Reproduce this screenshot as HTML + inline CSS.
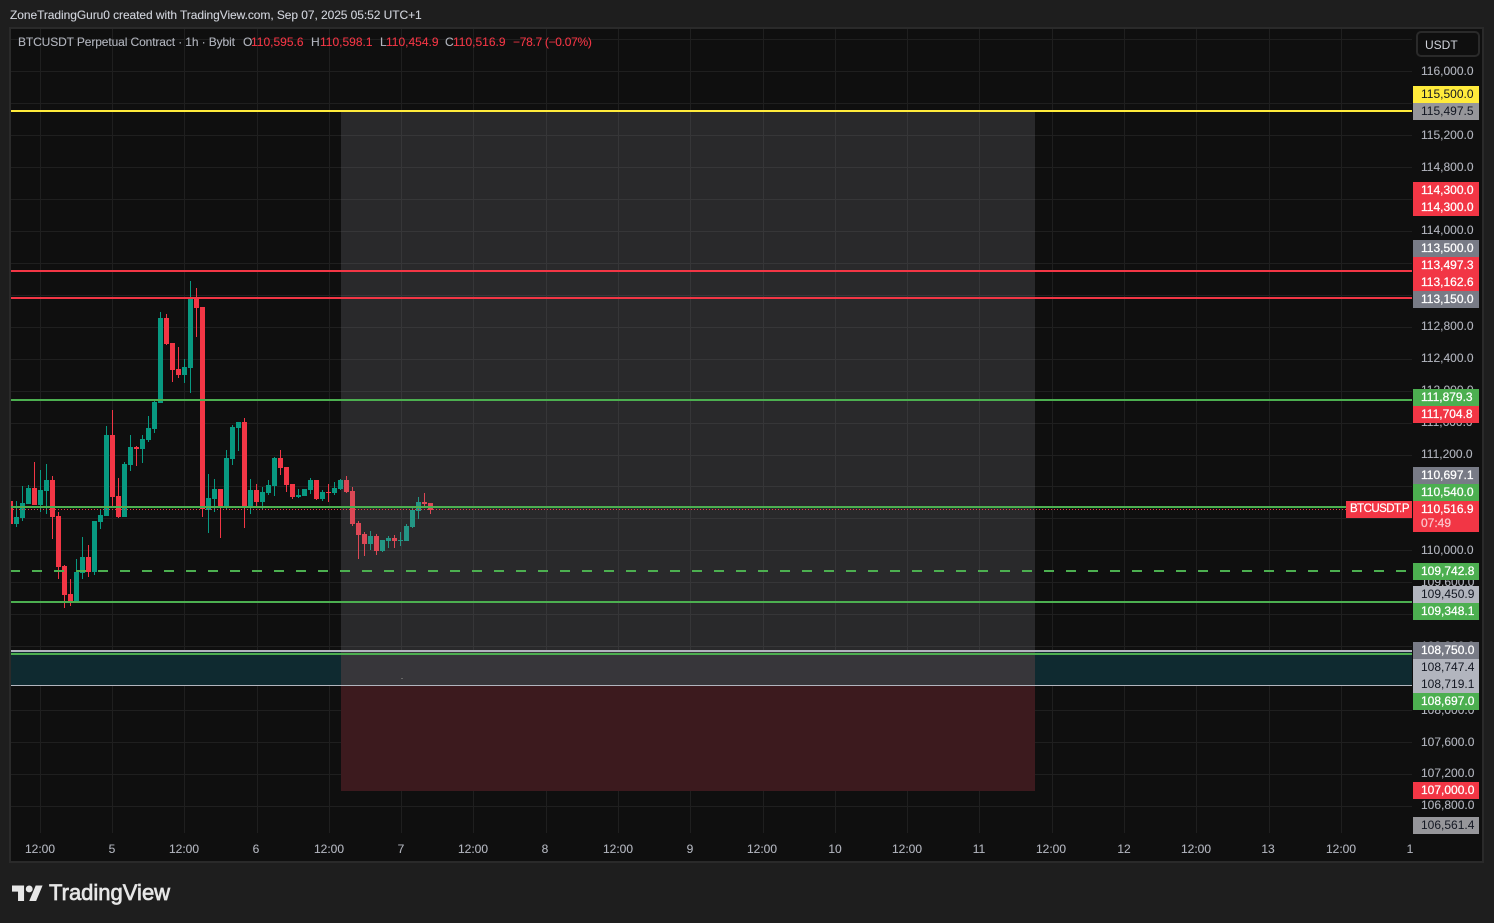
<!DOCTYPE html>
<html><head><meta charset="utf-8"><style>
html,body{margin:0;padding:0;background:#1e1e1e;width:1494px;height:923px;overflow:hidden}
body{position:relative;font:12px/17px "Liberation Sans",sans-serif;color:#b2b5be}
.a{position:absolute;white-space:nowrap}
#chart{position:absolute;left:9px;top:27px;width:1475px;height:836px;box-sizing:border-box;border:2px solid #2a2a2a;background:#0f0f0f}
svg{position:absolute;left:0;top:0}
.p{position:absolute;left:1421px;height:17px;line-height:17px;color:#b2b5be;white-space:nowrap;-webkit-text-stroke:.1px #b2b5be}
.t{position:absolute;left:1413px;width:66px;height:17px;line-height:17px;box-sizing:border-box;padding-left:8px;color:#fff;white-space:nowrap;-webkit-text-stroke:.25px currentColor}
.g{background:#4caf50}.r{background:#f23645}.s{background:#787b86}.l{background:#b2b5be;color:#131722;-webkit-text-stroke:0}.d{background:#96969a;color:#131722;-webkit-text-stroke:0}.y{background:#ffeb3b;color:#131722;-webkit-text-stroke:0}
.x{position:absolute;top:841px;width:40px;text-align:center;color:#b2b5be;line-height:17px;-webkit-text-stroke:.1px #b2b5be}
.lg{top:34px;-webkit-text-stroke:.1px currentColor}
</style></head><body>
<div class="a" style="left:10px;top:7px;color:#d1d4dc;letter-spacing:-.07px;-webkit-text-stroke:.1px #d1d4dc">ZoneTradingGuru0 created with TradingView.com, Sep 07, 2025 05:52 UTC+1</div>
<div id="chart"></div>
<svg width="1494" height="923" shape-rendering="crispEdges" fill="none">
<defs><clipPath id="c"><rect x="11" y="29" width="1401" height="804"/></clipPath></defs>
<g clip-path="url(#c)">
<path stroke="#1f1f1f" d="M11 39.5H1412M11 71.5H1412M11 103.5H1412M11 135.5H1412M11 167.5H1412M11 199.5H1412M11 231.5H1412M11 263.5H1412M11 295.5H1412M11 327.5H1412M11 359.5H1412M11 391.5H1412M11 423.5H1412M11 455.5H1412M11 486.5H1412M11 518.5H1412M11 550.5H1412M11 582.5H1412M11 614.5H1412M11 646.5H1412M11 678.5H1412M11 710.5H1412M11 742.5H1412M11 774.5H1412M11 806.5H1412M40.5 29V833M112.5 29V833M184.5 29V833M257.5 29V833M329.5 29V833M401.5 29V833M473.5 29V833M546.5 29V833M618.5 29V833M690.5 29V833M763.5 29V833M835.5 29V833M907.5 29V833M979.5 29V833M1052.5 29V833M1124.5 29V833M1196.5 29V833M1269.5 29V833M1341.5 29V833"/>
<path stroke="#089981" d="M16.5 501V527M22.5 486V521M28.5 485V504M40.5 470V512M46.5 464V514M76.5 559V602M82.5 537V579M94.5 521V575M100.5 509V529M106.5 426V516M124.5 462V517M130.5 435V471M142.5 435V463M148.5 416V442M154.5 401V433M160.5 312V403M184.5 359V383M190.5 281V393M208.5 474V533M214.5 479V512M226.5 450V510M232.5 425V465M238.5 422V451M250.5 479V514M262.5 487V510M268.5 480V495M274.5 457V496M298.5 489V498M304.5 489V496M310.5 478V494M322.5 490V501M334.5 482V495M340.5 479V490M370.5 531V550M382.5 540V552M388.5 536V548M400.5 532V546M406.5 524V541M412.5 506V528M418.5 497V519"/>
<path stroke="#089981" stroke-width="5" d="M16.5 517V524M22.5 503V518M28.5 488V504M40.5 490V505M46.5 480V491M76.5 572V602M82.5 557V573M94.5 521V572M100.5 515V522M106.5 435V516M124.5 464V517M130.5 447V465M142.5 439V449M148.5 428V440M154.5 402V429M160.5 318V403M184.5 367V375M190.5 298V368M208.5 498V510M214.5 489V499M226.5 458V507M232.5 427V459M238.5 422V428M250.5 490V507M262.5 492V502M268.5 485V493M274.5 458V486M298.5 495V497M304.5 489V496M310.5 480V490M322.5 492V499M334.5 488V493M340.5 480V489M370.5 536V544M382.5 540V551M388.5 538V541M400.5 540V541M406.5 526V541M412.5 510V527M418.5 502V511"/>
<path stroke="#f23645" d="M10.5 497V534M34.5 462V505M52.5 476V539M58.5 512V579M64.5 565V608M70.5 579V606M88.5 545V577M112.5 410V506M118.5 478V518M136.5 446V466M166.5 314V345M172.5 343V382M178.5 347V378M196.5 288V337M202.5 307V517M220.5 489V538M244.5 418V528M256.5 484V507M280.5 450V475M286.5 467V492M292.5 484V499M316.5 480V500M328.5 484V502M346.5 476V493M352.5 487V526M358.5 521V559M364.5 532V556M376.5 534V555M394.5 535V548M424.5 493V507M430.5 503V514"/>
<path stroke="#f23645" stroke-width="5" d="M10.5 501V524M34.5 488V505M52.5 480V517M58.5 516V567M64.5 566V595M70.5 594V602M88.5 557V572M112.5 435V497M118.5 496V517M136.5 447V449M166.5 318V344M172.5 343V370M178.5 369V375M196.5 297V308M202.5 307V509M220.5 489V507M244.5 422V507M256.5 490V502M280.5 458V468M286.5 467V485M292.5 484V497M316.5 480V499M328.5 492V493M346.5 480V492M352.5 491V524M358.5 523V535M364.5 534V544M376.5 536V551M394.5 538V541M424.5 502V504M430.5 503V510"/>
<rect x="11" y="652" width="330" height="33" fill="#0f2a30"/>
<rect x="1035" y="652" width="377" height="33" fill="#0f2a30"/>
<rect x="341" y="111" width="694" height="574" fill="rgba(140,142,150,.21)"/>
<rect x="341" y="652" width="694" height="33" fill="#37363a"/>
<rect x="341" y="685" width="694" height="106" fill="#3c1a1e"/>
<rect x="401" y="678" width="2" height="1" fill="#666"/>
<path stroke="#f23645" stroke-dasharray="1 2" d="M10 509.5H1346"/>
<rect x="11" y="110" width="1401" height="2" fill="#ffeb3b"/>
<rect x="11" y="270" width="1401" height="2" fill="#f23645"/>
<rect x="11" y="297" width="1401" height="2" fill="#f23645"/>
<rect x="11" y="399" width="1401" height="2" fill="#4caf50"/>
<rect x="11" y="506" width="1401" height="2" fill="#4caf50"/>
<path stroke="#4caf50" stroke-width="2" stroke-dasharray="10 12" d="M10 571H1412"/>
<rect x="11" y="601" width="1401" height="2" fill="#4caf50"/>
<rect x="11" y="650" width="1401" height="2" fill="#b2b5be"/>
<rect x="11" y="653" width="1401" height="2" fill="#4caf50"/>
<rect x="11" y="685" width="1401" height="1" fill="#b2b5be"/>
</g>
</svg>
<div class="a lg" style="left:18px;letter-spacing:-.11px">BTCUSDT Perpetual Contract · 1h · Bybit</div>
<div class="a lg" style="left:243px">O</div><div class="a lg" style="left:251px;color:#f23645">110,595.6</div>
<div class="a lg" style="left:311px">H</div><div class="a lg" style="left:320px;color:#f23645">110,598.1</div>
<div class="a lg" style="left:380px">L</div><div class="a lg" style="left:386px;color:#f23645">110,454.9</div>
<div class="a lg" style="left:445px">C</div><div class="a lg" style="left:453px;color:#f23645">110,516.9</div>
<div class="a lg" style="left:513px;color:#f23645;letter-spacing:-.3px">−78.7 (−0.07%)</div>
<div class="a" style="left:1416px;top:31px;width:64px;height:26px;box-sizing:border-box;border:2px solid #2a2a2a;border-radius:5px;background:#0f0f0f;color:#d1d4dc;line-height:25px;padding-left:7px">USDT</div>
<div class="p" style="top:63px">116,000.0</div>
<div class="p" style="top:127px">115,200.0</div>
<div class="p" style="top:159px">114,800.0</div>
<div class="p" style="top:222px">114,000.0</div>
<div class="p" style="top:318px">112,800.0</div>
<div class="p" style="top:350px">112,400.0</div>
<div class="p" style="top:382px">112,000.0</div>
<div class="p" style="top:414px">111,600.0</div>
<div class="p" style="top:446px">111,200.0</div>
<div class="p" style="top:542px">110,000.0</div>
<div class="p" style="top:574px">109,600.0</div>
<div class="p" style="top:638px">108,800.0</div>
<div class="p" style="top:702px">108,000.0</div>
<div class="p" style="top:734px">107,600.0</div>
<div class="p" style="top:765px">107,200.0</div>
<div class="p" style="top:797px">106,800.0</div>
<div class="t y" style="top:86px">115,500.0</div>
<div class="t d" style="top:103px">115,497.5</div>
<div class="t r" style="top:182px">114,300.0</div>
<div class="t r" style="top:199px">114,300.0</div>
<div class="t s" style="top:240px">113,500.0</div>
<div class="t r" style="top:257px">113,497.3</div>
<div class="t r" style="top:274px">113,162.6</div>
<div class="t s" style="top:291px">113,150.0</div>
<div class="t g" style="top:389px">111,879.3</div>
<div class="t r" style="top:406px">111,704.8</div>
<div class="t s" style="top:467px">110,697.1</div>
<div class="t g" style="top:484px">110,540.0</div>
<div class="t r" style="top:501px;height:31px">110,516.9<br><span style="position:relative;top:-3px;color:#fbc4c9">07:49</span></div>
<div class="a r" style="left:1346px;top:501px;width:66px;height:17px;line-height:17px;color:#fff;padding-left:4px;box-sizing:border-box;font-size:11.5px;letter-spacing:-.55px;-webkit-text-stroke:.2px #fff">BTCUSDT.P</div>
<div class="t g" style="top:563px">109,742.8</div>
<div class="t l" style="top:586px">109,450.9</div>
<div class="t g" style="top:603px">109,348.1</div>
<div class="t s" style="top:642px">108,750.0</div>
<div class="t l" style="top:659px">108,747.4</div>
<div class="t l" style="top:676px">108,719.1</div>
<div class="t g" style="top:693px">108,697.0</div>
<div class="t r" style="top:782px">107,000.0</div>
<div class="t d" style="top:817px">106,561.4</div>
<div class="x" style="left:20px">12:00</div><div class="x" style="left:92px">5</div><div class="x" style="left:164px">12:00</div><div class="x" style="left:236px">6</div><div class="x" style="left:309px">12:00</div><div class="x" style="left:381px">7</div><div class="x" style="left:453px">12:00</div><div class="x" style="left:525px">8</div><div class="x" style="left:598px">12:00</div><div class="x" style="left:670px">9</div><div class="x" style="left:742px">12:00</div><div class="x" style="left:815px">10</div><div class="x" style="left:887px">12:00</div><div class="x" style="left:959px">11</div><div class="x" style="left:1031px">12:00</div><div class="x" style="left:1104px">12</div><div class="x" style="left:1176px">12:00</div><div class="x" style="left:1248px">13</div><div class="x" style="left:1321px">12:00</div><div class="x" style="left:1390px">1</div>
<svg style="left:12px;top:882px" width="31" height="20" viewBox="0 0 36 23"><path fill="#e6e6e6" d="M14 22H7V11H0V4h14v18zM28 22h-8l7.5-18h8L28 22z"/><circle fill="#e6e6e6" cx="20" cy="8" r="4"/></svg>
<div class="a" style="left:49px;top:880px;font-size:22px;line-height:26px;color:#e6e6e6;-webkit-text-stroke:.7px #e6e6e6">TradingView</div>
</body></html>
